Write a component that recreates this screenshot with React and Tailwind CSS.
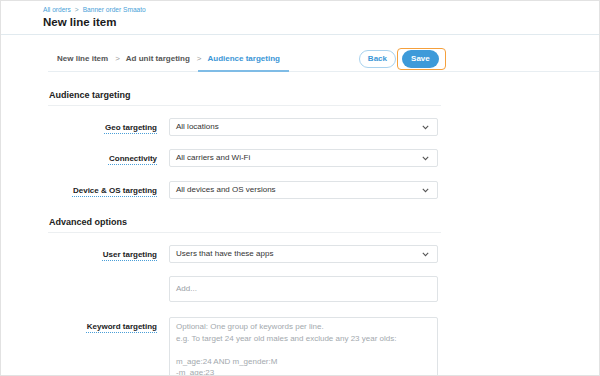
import React from "react";

const Chevron = () => (
  <svg width="7" height="5" viewBox="0 0 7 5" className="shrink-0">
    <path d="M0.8 0.9 L3.5 3.6 L6.2 0.9" fill="none" stroke="#555" strokeWidth="1.1" />
  </svg>
);

const Label = ({ children, top }) => (
  <div className={`w-[109px] shrink-0 flex justify-end ${top ? "pt-[4px]" : ""}`}>
    <span className="text-[8px] font-bold text-[#222] leading-[11px] underline decoration-dotted decoration-[#4a9fd8] underline-offset-[3px]">
      {children}
    </span>
  </div>
);

const Select = ({ value }) => (
  <div className="ml-[12px] w-[269px] h-[18px] border border-[#dfe3e6] rounded-[2px] flex items-center justify-between pl-[6px] pr-[8px]">
    <span className="text-[8px] text-[#333] leading-none">{value}</span>
    <Chevron />
  </div>
);

export default function App() {
  return (
    <div
      className="w-[600px] h-[376px] overflow-hidden bg-white border border-[#e2e2e2] box-border"
      style={{ fontFamily: '"Liberation Sans", Arial, sans-serif' }}
    >
      {/* Header */}
      <div className="h-[34px] border-b border-[#e1eaef] pl-[42px] pt-[4px]">
        <div className="text-[6.6px] leading-[9px] text-[#4a9fd8] flex items-center">
          <span>All orders</span>
          <span className="mx-[4px] text-[#7a9fb8]">&gt;</span>
          <span>Banner order Smaato</span>
        </div>
        <div className="text-[11.5px] leading-[15px] font-bold text-[#1a1a1a] mt-[1px]">New line item</div>
      </div>

      {/* Tabs + buttons */}
      <div className="pt-[12px]">
        <div className="ml-[47px] h-[25px] flex items-stretch border-b border-[#e8eef2]">
          <div className="flex items-center pl-[9px] text-[8px] font-bold text-[#555]">New line item</div>
          <div className="flex items-center ml-[7px] text-[8px] text-[#999]">&gt;</div>
          <div className="flex items-center ml-[6px] text-[8px] font-bold text-[#555]">Ad unit targeting</div>
          <div className="flex items-center ml-[7px] text-[8px] text-[#999]">&gt;</div>
          <div className="flex items-center ml-[-3px] px-[9px] text-[8px] font-bold text-[#3b96d6] border-b-2 border-[#7fbce6] -mb-px">
            Audience targeting
          </div>
          <div className="flex items-center ml-[70px]">
            <div className="w-[37px] h-[18px] rounded-full border border-[#a9d2ee] flex items-center justify-center text-[8px] font-bold text-[#3b96d6]">
              Back
            </div>
            <div className="ml-[1px] border-[1.5px] border-[#f5a03c] rounded-[4px] pl-[4px] pr-[6px] pt-[1.5px] pb-[1px]">
              <div className="w-[37px] h-[18px] rounded-full bg-[#3d9ad9] flex items-center justify-center text-[8px] font-bold text-white">
                Save
              </div>
            </div>
          </div>
        </div>
      </div>

      {/* Audience targeting */}
      <div className="ml-[47px] w-[393px]">
        <div className="mt-[18px] pb-[4px] border-b border-[#eceff1] pl-[1px] text-[9px] leading-[11px] font-bold text-[#222]">
          Audience targeting
        </div>
        <div className="mt-[12px] flex items-center">
          <Label>Geo targeting</Label>
          <Select value="All locations" />
        </div>
        <div className="mt-[13px] flex items-center">
          <Label>Connectivity</Label>
          <Select value="All carriers and Wi-Fi" />
        </div>
        <div className="mt-[14px] flex items-center">
          <Label>Device &amp; OS targeting</Label>
          <Select value="All devices and OS versions" />
        </div>

        <div className="mt-[18px] pb-[4px] border-b border-[#eceff1] pl-[1px] text-[9px] leading-[11px] font-bold text-[#222]">
          Advanced options
        </div>
        <div className="mt-[12px] flex items-center">
          <Label>User targeting</Label>
          <Select value="Users that have these apps" />
        </div>
        <div className="mt-[13px] flex">
          <div className="w-[109px] shrink-0" />
          <div className="ml-[12px] w-[269px] h-[26px] border border-[#dfe3e6] rounded-[2px] flex items-center pl-[6px] text-[8px] text-[#9aa0a6]">
            Add...
          </div>
        </div>
        <div className="mt-[15px] flex items-start">
          <Label top>Keyword targeting</Label>
          <div className="ml-[12px] w-[269px] h-[90px] border border-[#dfe3e6] rounded-[2px] pl-[6px] pt-[3px] text-[8px] leading-[11.5px] text-[#a3a9ae]">
            <div>Optional: One group of keywords per line.</div>
            <div>e.g. To target 24 year old males and exclude any 23 year olds:</div>
            <div className="h-[11.5px]" />
            <div>m_age:24 AND m_gender:M</div>
            <div>-m_age:23</div>
          </div>
        </div>
      </div>
    </div>
  );
}
